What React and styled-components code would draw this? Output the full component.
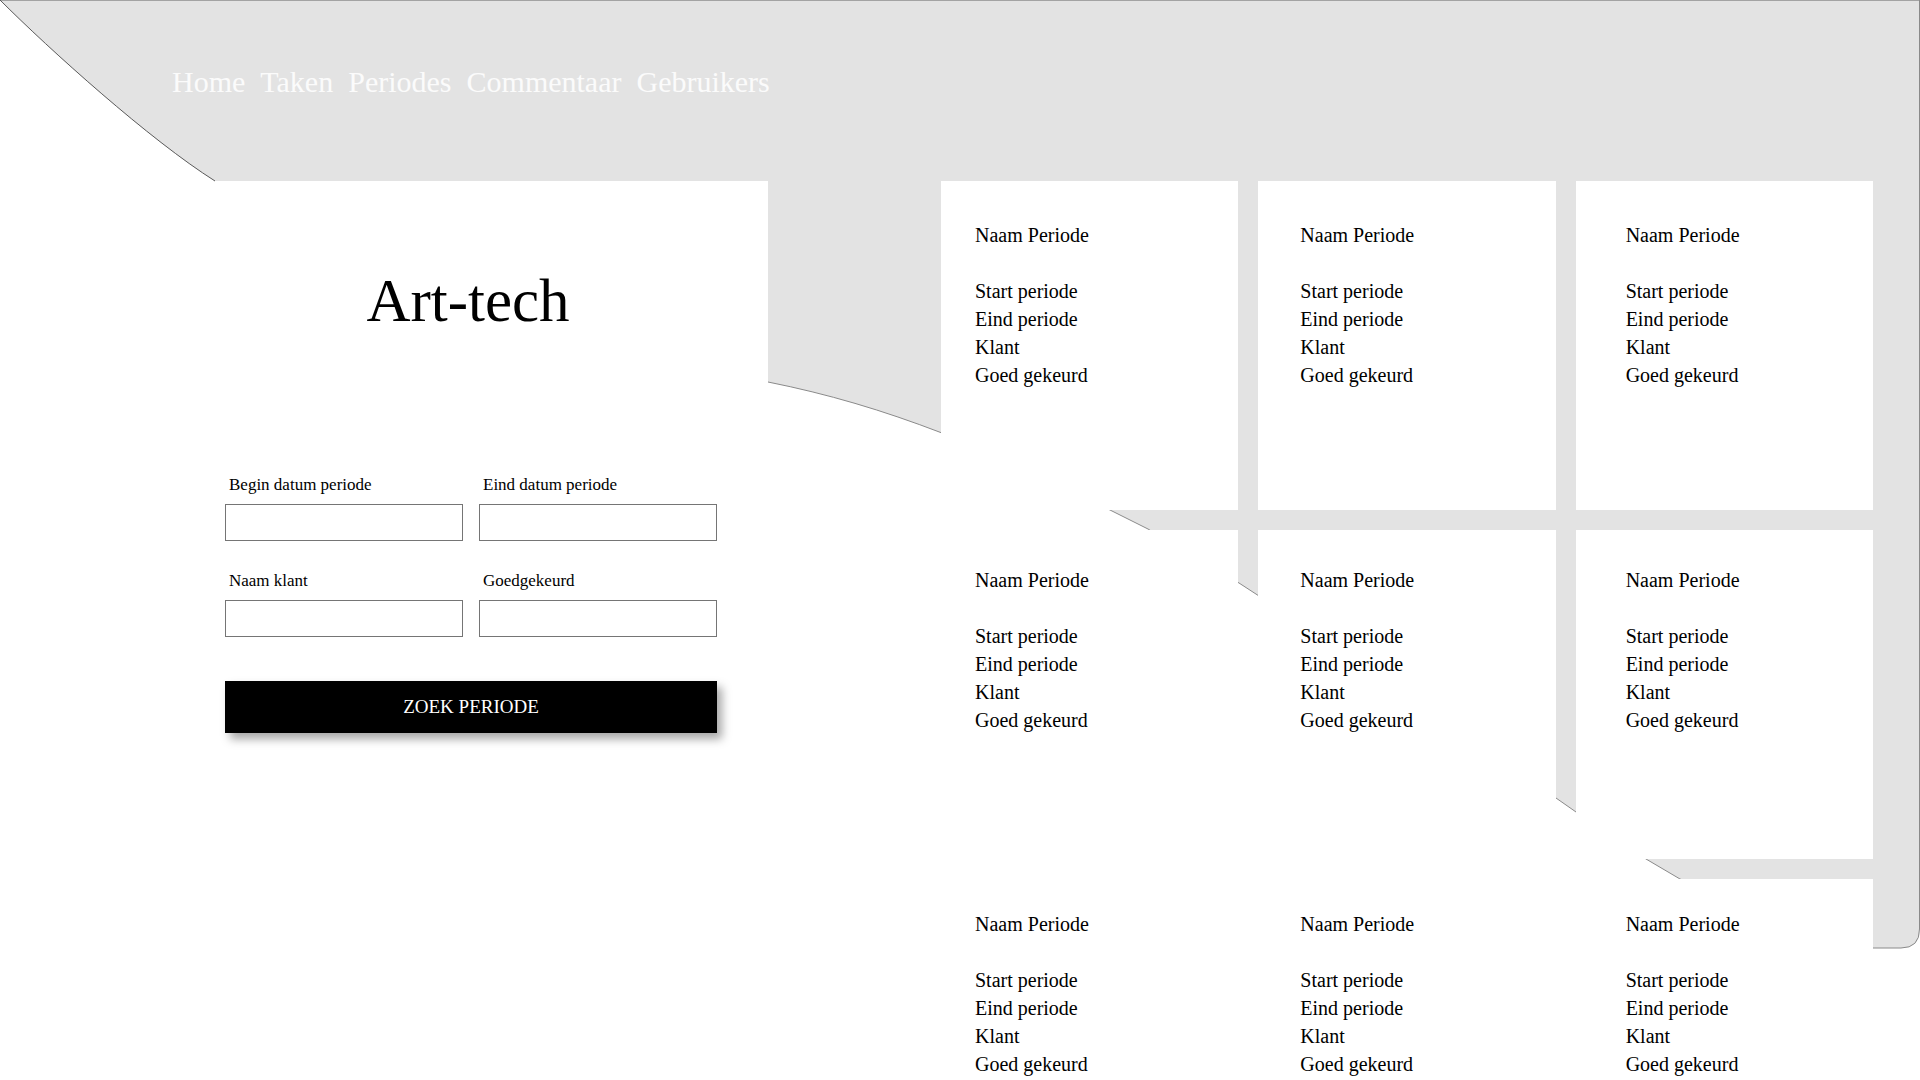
import React from 'react';
import styled, { createGlobalStyle } from 'styled-components';

const navItems = ['Home', 'Taken', 'Periodes', 'Commentaar', 'Gebruikers'];

const fields = [
    { label: 'Begin datum periode' },
    { label: 'Eind datum periode' },
    { label: 'Naam klant' },
    { label: 'Goedgekeurd' }
];

const periods = Array.from({ length: 9 }, (_, i) => ({
    id: i,
    name: 'Naam Periode',
    lines: ['Start periode', 'Eind periode', 'Klant', 'Goed gekeurd']
}));

export default function App() {
    return (
        <Page>
            <GlobalStyle />
            <Backdrop width="1920" height="1080" viewBox="0 0 1920 1080">
                <path
                    fill="#e3e3e3"
                    d="M0,0 L1920,0 L1920,929 Q1920,948 1901,948 L1873,948 L1680,879 L1646,859 L1576,812 L1556,798 L1259,596 L1239,583 L1148,529 L1110,510 L942,433 C882,410 828,394 768,382 L768,181 L215,181 C150,140 50,50 0,0 Z"
                />
                <path d="M0,0.5 H1920" stroke="#a3a3a3" strokeWidth="1.2" fill="none" />
                <path d="M0,0 C50,50 150,140 215,181" stroke="#5a5a5a" strokeWidth="1" fill="none" />
                <path
                    d="M768,382 C828,394 882,410 942,433 L1110,510 L1148,529 L1239,583 L1259,596 L1556,798 L1576,812 L1646,859 L1680,879 L1873,948 L1901,948 Q1919.5,948 1919.5,929 L1919.5,0"
                    stroke="#8a8a8a"
                    strokeWidth="1"
                    fill="none"
                />
            </Backdrop>

            <Header>
                <Nav>
                    {navItems.map(item => <NavLink key={item}>{item}</NavLink>)}
                </Nav>
            </Header>

            <Main>
                <SearchPanel>
                    <Title>Art-tech</Title>
                    <SearchForm onSubmit={e => e.preventDefault()}>
                        {fields.map(field =>
                            <Field key={field.label}>
                                <FieldLabel>{field.label}</FieldLabel>
                                <FieldInput type="text" />
                            </Field>
                        )}
                        <SearchButton type="submit">ZOEK PERIODE</SearchButton>
                    </SearchForm>
                </SearchPanel>

                <PeriodGrid>
                    {periods.map((period, index) =>
                        <PeriodCard key={period.id} $col={index % 3} $row={Math.floor(index / 3)}>
                            <PeriodName>{period.name}</PeriodName>
                            {period.lines.map(line => <PeriodLine key={line}>{line}</PeriodLine>)}
                        </PeriodCard>
                    )}
                </PeriodGrid>
            </Main>
        </Page>
    );
};

const GlobalStyle = createGlobalStyle`
    html, body {
        margin: 0;
        padding: 0;
        overflow: hidden;
        background: #fff;
    }
    body {
        font-family: "Liberation Serif", "Times New Roman", serif;
        color: #000;
    }
`

const Page = styled.div`
    position: relative;
    width: 1920px;
    height: 1080px;
    overflow: hidden;
`

const Backdrop = styled.svg`
    position: absolute;
    top: 0;
    left: 0;
    z-index: 0;
    display: block;
`

const Header = styled.header`
    position: relative;
    z-index: 1;
    height: 181px;
    box-sizing: border-box;
    padding: 67px 0 0 172px;
`

const Nav = styled.nav`
    display: flex;
    gap: 15px;
`

const NavLink = styled.a`
    color: #fbfbfb;
    font-size: 30px;
    line-height: 30px;
    cursor: pointer;
`

const Main = styled.main`
    position: relative;
    z-index: 1;
    display: flex;
    align-items: flex-start;
`

const SearchPanel = styled.section`
    margin-left: 215px;
    width: 553px;
    min-height: 899px;
    box-sizing: border-box;
    padding: 89px 52px 0 10px;
    background: #fff;
`

const Title = styled.h1`
    margin: 0;
    padding-right: 5px;
    font-size: 61px;
    line-height: 61px;
    font-weight: normal;
    text-align: center;
`

const SearchForm = styled.form`
    margin-top: 144px;
    display: grid;
    grid-template-columns: 238px 238px;
    column-gap: 16px;
    row-gap: 30px;
`

const Field = styled.label`
    display: flex;
    flex-direction: column;
`

const FieldLabel = styled.span`
    font-size: 17px;
    line-height: 20px;
    padding-left: 4px;
    margin-bottom: 9px;
`

const FieldInput = styled.input`
    height: 37px;
    box-sizing: border-box;
    border: 1px solid #757575;
    border-radius: 0;
    background: #fff;
    margin: 0;
    padding: 0 8px;
    font-family: inherit;
    font-size: 16px;
    outline: none;
`

const SearchButton = styled.button`
    grid-column: 1 / -1;
    margin-top: 14px;
    height: 52px;
    border: none;
    background: #000;
    color: #fff;
    font-family: "Liberation Serif", "Times New Roman", serif;
    font-size: 19px;
    letter-spacing: 0;
    box-shadow: 5px 6px 9px rgba(0, 0, 0, 0.35);
    cursor: pointer;
`

const PeriodGrid = styled.section`
    margin-left: 173px;
    width: 932px;
    display: grid;
    grid-template-columns: repeat(3, 1fr);
    grid-auto-rows: 329px;
    gap: 20px;
`

const PeriodCard = styled.article`
    background: #fff;
    box-sizing: border-box;
    padding-left: ${props => 34 + props.$col * 8}px;
    padding-top: ${props => 40 - props.$row * 4.5}px;
    font-size: 20px;
    line-height: 28px;
`

const PeriodName = styled.div`
    margin-bottom: 28px;
`

const PeriodLine = styled.div``
